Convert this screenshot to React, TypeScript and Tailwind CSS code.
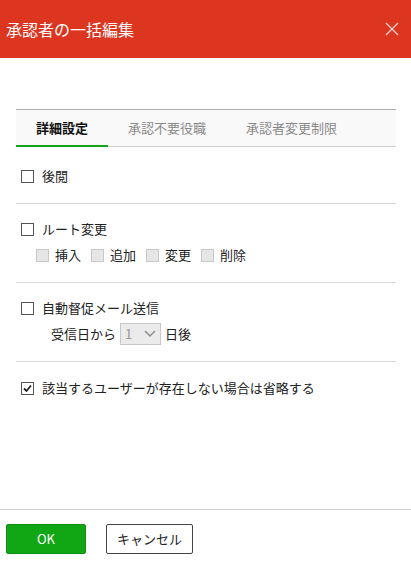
import React from "react";

const font = { fontFamily: '"Noto Sans CJK JP", "Noto Sans", sans-serif' };

function Box({ checked = false, disabled = false }: { checked?: boolean; disabled?: boolean }) {
  if (disabled) {
    return <span className="inline-block w-[13px] h-[13px] border border-[#c8c8c8] bg-[#e6e6e6] shrink-0" />;
  }
  return (
    <span className="relative inline-flex items-center justify-center w-[13px] h-[13px] border border-[#555] bg-white shrink-0">
      {checked && (
        <svg width="11" height="11" viewBox="0 0 11 11" className="absolute left-0 top-0">
          <path d="M2 5.5 L4.5 8 L9 2.5" fill="none" stroke="#222" strokeWidth="1.8" />
        </svg>
      )}
    </span>
  );
}

export default function App() {
  return (
    <div className="w-[411px] h-[566px] bg-white flex flex-col text-[13px] text-[#222]" style={font}>
      <div className="h-[58px] bg-[#dc3520] flex items-center justify-between pl-[6px] pr-[12px] shrink-0">
        <span className="text-white text-[16px]">承認者の一括編集</span>
        <svg width="14" height="14" viewBox="0 0 14 14">
          <path d="M1 1 L13 13 M13 1 L1 13" stroke="#fbd4cf" strokeWidth="1.3" />
        </svg>
      </div>
      <div className="flex-1 pt-[51px] pl-4 pr-[15px]">
        <div className="flex h-[38px] bg-[#f9f9f9] border-t border-t-[#acacac] border-b border-b-[#cfcfcf]">
          <div className="px-5 flex items-center font-bold text-[#111] border-b-2 border-b-[#16a21a] -mb-px">詳細設定</div>
          <div className="px-5 flex items-center text-[#8a8a8a]">承認不要役職</div>
          <div className="px-5 flex items-center text-[#8a8a8a]">承認者変更制限</div>
        </div>
        <div className="pt-[19px] pb-[17px] border-b border-[#d8d8d8]">
          <div className="h-[20px] flex items-center gap-[8px] pl-[5px]">
            <Box />
            <span>後閲</span>
          </div>
        </div>
        <div className="pt-[15px] pb-[17px] border-b border-[#d8d8d8]">
          <div className="h-[20px] flex items-center gap-[8px] pl-[5px]">
            <Box />
            <span>ルート変更</span>
          </div>
          <div className="h-[20px] mt-[6px] flex items-center pl-[20px] gap-[10px]">
            {["挿入", "追加", "変更", "削除"].map((t) => (
              <div key={t} className="flex items-center gap-[6px]">
                <Box disabled />
                <span>{t}</span>
              </div>
            ))}
          </div>
        </div>
        <div className="pt-[15px] pb-[16px] border-b border-[#d8d8d8]">
          <div className="h-[20px] flex items-center gap-[8px] pl-[5px]">
            <Box />
            <span>自動督促メール送信</span>
          </div>
          <div className="h-[22px] mt-[5px] flex items-center pl-[35px] gap-[4px]">
            <span>受信日から</span>
            <div className="w-[41px] h-[22px] border border-[#c8c8c8] bg-[#ebebeb] flex items-center justify-between px-[4px] text-[#999]">
              <span>1</span>
              <svg width="12" height="8" viewBox="0 0 12 8">
                <path d="M1 1 L6 6 L11 1" fill="none" stroke="#8c8c8c" strokeWidth="1.5" />
              </svg>
            </div>
            <span>日後</span>
          </div>
        </div>
        <div className="pt-[16px]">
          <div className="h-[20px] flex items-center gap-[8px] pl-[5px]">
            <Box checked />
            <span>該当するユーザーが存在しない場合は省略する</span>
          </div>
        </div>
      </div>
      <div className="h-[57px] border-t border-[#d0d0d0] flex items-start pt-[14px] pl-[6px] gap-[20px] shrink-0">
        <button className="w-[80px] h-[30px] bg-[#10a614] border border-[#0e8f12] rounded-[2px] text-white text-[13px]">OK</button>
        <button className="w-[87px] h-[30px] bg-white border border-[#444] rounded-[2px] text-[#222] text-[13px]">キャンセル</button>
      </div>
    </div>
  );
}
